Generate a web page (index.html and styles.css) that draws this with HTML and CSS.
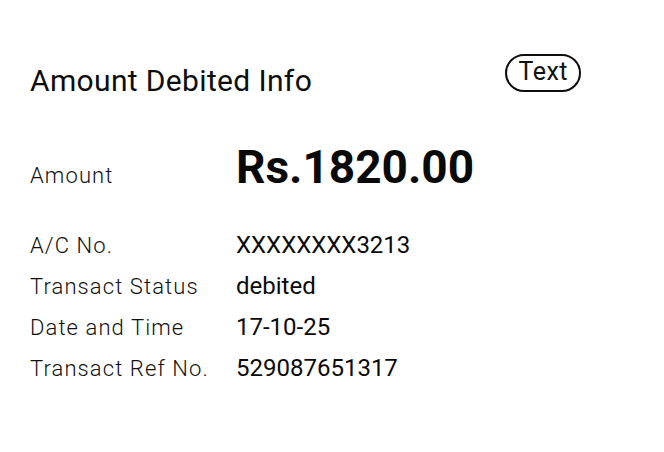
FILE: index.html
```html
<!DOCTYPE html>
<html>
<head>
<meta charset="utf-8">
<link rel="stylesheet" href="styles.css">
</head>
<body>
<div class="card">
  <div class="header">
    <h1 class="title">Amount Debited Info</h1>
    <span class="chip">Text</span>
  </div>
  <div class="amount-row">
    <span class="label">Amount</span>
    <span class="amount">Rs.1820.00</span>
  </div>
  <div class="details">
    <span class="label">A/C No.</span><span class="value">XXXXXXXX3213</span>
    <span class="label">Transact Status</span><span class="value">debited</span>
    <span class="label">Date and Time</span><span class="value">17-10-25</span>
    <span class="label">Transact Ref No.</span><span class="value">529087651317</span>
  </div>
</div>
</body>
</html>
```
FILE: styles.css
```css
html, body {
  margin: 0;
  padding: 0;
  background: #fff;
}
body {
  font-family: Roboto, "Liberation Sans", sans-serif;
  color: #111;
}
.card {
  width: 664px;
  height: 452px;
  padding: 0 0 0 30px;
  box-sizing: border-box;
}
.header {
  display: flex;
  align-items: flex-start;
  justify-content: space-between;
  width: 551px;
  padding-top: 54px;
}
.title {
  margin: 8px 0 0;
  font-size: 30px;
  font-weight: 400;
  line-height: 38px;
  letter-spacing: 0.35px;
  color: #0d0d0d;
}
.chip {
  border: 2px solid #0d0d0d;
  border-radius: 19px;
  padding: 0 11px 2px;
  height: 32px;
  line-height: 32px;
  font-size: 25px;
  letter-spacing: 0.5px;
}
.amount-row {
  display: grid;
  grid-template-columns: 206px auto;
  align-items: baseline;
  margin-top: 41px;
}
.label {
  font-size: 22px;
  font-weight: 300;
  color: #111;
  letter-spacing: 1.1px;
  line-height: 28px;
}
.amount {
  font-size: 46px;
  font-weight: 700;
  line-height: 52px;
  color: #0a0a0a;
}
.details {
  display: grid;
  grid-template-columns: 206px auto;
  align-items: baseline;
  row-gap: 12px;
  margin-top: 38px;
}
.value {
  font-size: 24px;
  font-weight: 400;
  line-height: 28px;
  color: #0a0a0a;
}
```
